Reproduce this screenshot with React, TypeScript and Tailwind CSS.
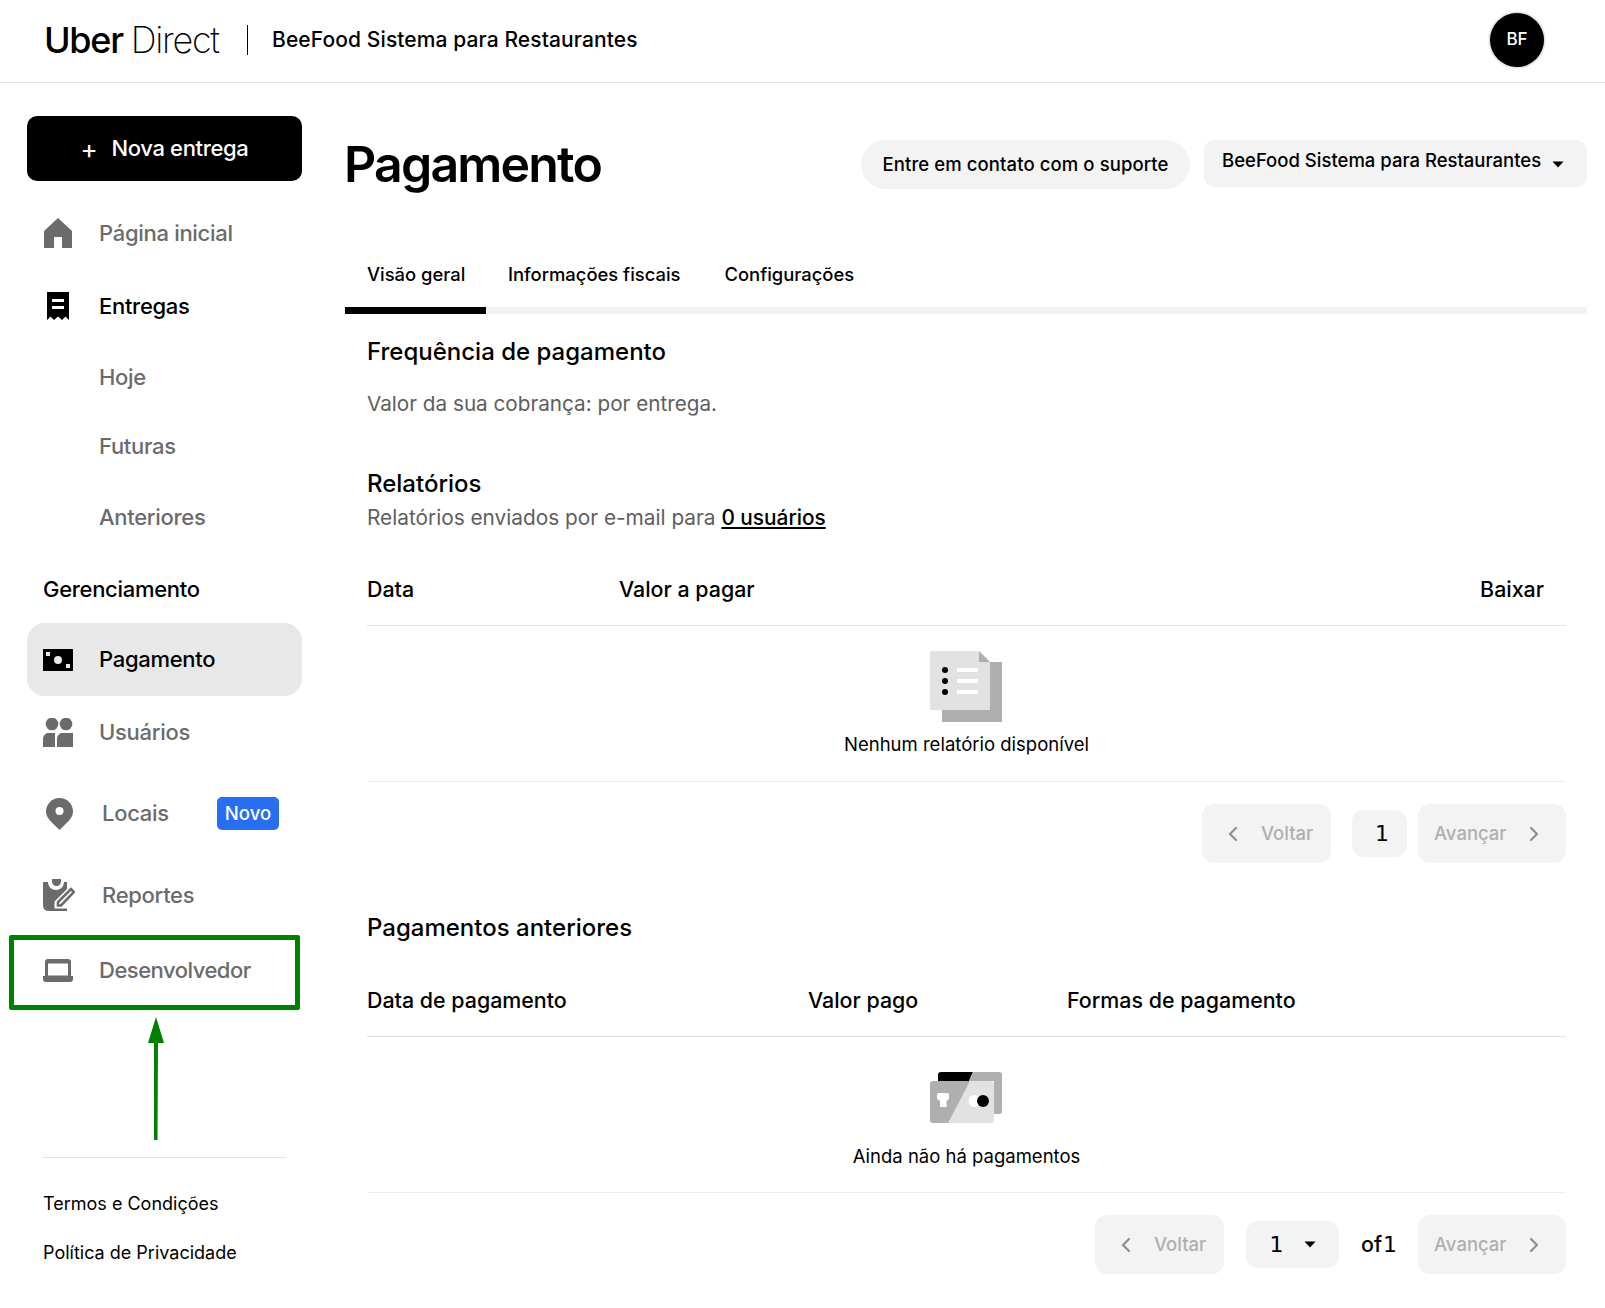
import { ChevronLeft, ChevronRight } from 'lucide-react';

const Caret = () => (
  <svg width="12" height="7" viewBox="0 0 12 7" className="shrink-0">
    <path d="M0.5 0.5H11.5L6 6.5Z" fill="#000" />
  </svg>
);

const HomeIcon = () => (
  <svg width="28" height="30" viewBox="0 0 28 30">
    <path d="M14 0L28 13V30H18V19H10V30H0V13Z" fill="#6b6b6b" />
  </svg>
);

const ReceiptIcon = () => (
  <svg width="22" height="28" viewBox="0 0 22 28">
    <path d="M0 0H22V28L18.5 24.5L15 28L11 24.5L7 28L3.500 24.500L0 28Z" fill="#000" />
    <rect x="5" y="7" width="12" height="3" fill="#fff" />
    <rect x="5" y="14" width="12" height="3" fill="#fff" />
  </svg>
);

const MoneyIcon = () => (
  <svg width="30" height="22" viewBox="0 0 30 22">
    <rect width="30" height="22" fill="#000" />
    <circle cx="15" cy="11" r="4" fill="#e8e8e8" />
    <rect x="3" y="3" width="4" height="4" fill="#e8e8e8" />
    <rect x="23" y="15" width="4" height="4" fill="#e8e8e8" />
  </svg>
);

const UsersIcon = () => (
  <svg width="30" height="29" viewBox="0 0 30 29">
    <circle cx="9" cy="6" r="6.300" fill="#6b6b6b" />
    <circle cx="23" cy="6" r="6.300" fill="#6b6b6b" />
    <path d="M0 29V21Q0 17 4 15H12V29Z" fill="#6b6b6b" />
    <path d="M14 29V21Q14 17 18 15H30V29Z" fill="#6b6b6b" />
  </svg>
);

const PinIcon = () => (
  <svg width="27" height="32" viewBox="0 0 27 32">
    <path d="M13.500 0C21 0 27 6 27 13.500C27 19 23 23 13.500 32C4 23 0 19 0 13.500C0 6 6 0 13.500 0Z" fill="#6b6b6b" />
    <circle cx="13.500" cy="13" r="4" fill="#fff" />
  </svg>
);

const ClipboardIcon = () => (
  <svg width="32" height="32" viewBox="0 0 32 32">
    <path d="M0 3H5C5 8 9 11 13 11C17 11 21 8 21 3H24V10L11.500 22.500V29.500H24V32H6Q0 32 0 26Z" fill="#6b6b6b" />
    <path d="M9 0H18V2C18 5 16 7 13.500 7C11 7 9 5 9 2Z" fill="#6b6b6b" />
    <path d="M15 26.500V23L28 10L31 13L18 26.500Z" fill="none" stroke="#6b6b6b" strokeWidth="2.600" />
  </svg>
);

const LaptopIcon = () => (
  <svg width="30" height="23" viewBox="0 0 30 23">
    <path d="M2 3Q2 0 5 0H25Q28 0 28 3V17H30V20Q30 23 27 23H3Q0 23 0 20V17H2ZM5 4.500V16.500H25V4.500Z" fill="#6b6b6b" fillRule="evenodd" />
  </svg>
);

const ReportsEmpty = () => (
  <svg width="72" height="71" viewBox="0 0 72 71" className="-ml-[1px]">
    <rect x="12" y="11" width="60" height="60" fill="#afafaf" />
    <path d="M0 0H49L60 11V59H0Z" fill="#e2e2e2" />
    <path d="M49 0L60 11H49Z" fill="#afafaf" />
    <circle cx="15" cy="19" r="3" fill="#000" />
    <circle cx="15" cy="30" r="3" fill="#000" />
    <circle cx="15" cy="41" r="3" fill="#000" />
    <rect x="27" y="17" width="21" height="4" fill="#fff" />
    <rect x="27" y="28" width="21" height="4" fill="#fff" />
    <rect x="27" y="39" width="21" height="4" fill="#fff" />
  </svg>
);

const CardsEmpty = () => (
  <svg width="72" height="51" viewBox="0 0 72 51" className="-ml-[1px]">
    <path d="M11 0H43L39 9H8V3Q8 0 11 0Z" fill="#000" />
    <path d="M43 0H69Q72 0 72 3V39Q72 42 69 42H64V9H39Z" fill="#afafaf" />
    <rect x="0" y="9" width="64" height="42" rx="3" fill="#e2e2e2" />
    <path d="M3 9H40L18 51H3Q0 51 0 48V12Q0 9 3 9Z" fill="#afafaf" />
    <path d="M9 21H17Q19 21 19 23V27L16.500 29V35H10V29L7 27V23Q7 21 9 21Z" fill="#fff" />
    <circle cx="44.500" cy="29" r="6" fill="#fff" />
    <circle cx="53" cy="29" r="6" fill="#000" />
  </svg>
);

const PageButton = ({ label, dir }: { label: string; dir: 'prev' | 'next' }) => (
  <div className="flex h-[59px] items-center rounded-[12px] bg-[#f3f3f3] text-[18.5px] font-medium text-[#afafaf]">
    {dir === 'prev' && <ChevronLeft size={24} strokeWidth={2.2} className="ml-[19px] mr-[16px] text-[#8f8f8f]" />}
    <span className={dir === 'next' ? 'ml-[16px] mr-[15px]' : ''}>{label}</span>
    {dir === 'next' && <ChevronRight size={24} strokeWidth={2.2} className="text-[#8f8f8f]" />}
  </div>
);

const App = () => {
  return (
    <div className="relative h-[1308px] w-[1605px] overflow-hidden bg-white font-['Inter',sans-serif] text-black">
      <header className="flex h-[83px] items-center border-b border-[#e2e2e2] pb-[2px] pl-[44px] pr-[61px]">
        <div className="flex w-[203px] items-baseline text-[36px] leading-none">
          <span className="font-medium tracking-[-1.3px]">Uber</span>
          <span className="ml-[8px] font-extralight tracking-[-1.3px]">Direct</span>
        </div>
        <div className="h-[30px] w-px bg-black" />
        <span className="ml-[24px] text-[21px] font-medium tracking-[0.1px]">BeeFood Sistema para Restaurantes</span>
        <div className="ml-auto flex h-[54px] w-[54px] items-center justify-center rounded-full bg-black text-[17px] font-medium text-white shadow-[0_0_3px_rgba(0,0,0,0.4)]">
          BF
        </div>
      </header>

      <div className="flex">
        <aside className="ml-[27px] w-[275px] shrink-0">
          <button className="mt-[33px] flex h-[65px] w-full items-center justify-center gap-[14px] rounded-[10px] bg-black text-[22px] font-medium tracking-[-0.35px] text-white">
            <span className="text-[26px] font-normal leading-none">+</span>
            <span>Nova entrega</span>
          </button>

          <nav className="text-[22px] font-medium tracking-[-0.3px] text-[#6b6b6b]">
            <div className="mt-[17px] flex h-[70px] items-center pl-[17px]">
              <div className="w-[55px]"><HomeIcon /></div>
              <span>Página inicial</span>
            </div>
            <div className="flex h-[76px] items-center pl-[20px] text-black">
              <div className="w-[52px]"><ReceiptIcon /></div>
              <span>Entregas</span>
            </div>
            <div className="flex h-[67px] items-center pl-[72px]">Hoje</div>
            <div className="flex h-[71px] items-center pl-[72px]">Futuras</div>
            <div className="flex h-[70px] items-center pl-[72px]">Anteriores</div>
            <div className="flex h-[71px] items-center pl-[16px] pt-[3px] text-black">Gerenciamento</div>
            <div className="flex h-[73px] items-center rounded-[18px] bg-[#e8e8e8] pl-[16px] text-black">
              <div className="w-[56px]"><MoneyIcon /></div>
              <span>Pagamento</span>
            </div>
            <div className="flex h-[72px] items-center pl-[16px]">
              <div className="w-[56px]"><UsersIcon /></div>
              <span>Usuários</span>
            </div>
            <div className="flex h-[91px] items-center pl-[19px]">
              <div className="w-[56px]"><PinIcon /></div>
              <span className="w-[115px]">Locais</span>
              <span className="flex h-[33px] w-[62px] items-center justify-center rounded-[5px] bg-[#276ef1] text-[18.5px] tracking-normal text-white">Novo</span>
            </div>
            <div className="flex h-[72px] items-center pl-[16px]">
              <div className="w-[59px]"><ClipboardIcon /></div>
              <span>Reportes</span>
            </div>
            <div className="flex h-[77px] items-center pl-[16px] pt-[2px]">
              <div className="w-[56px]"><LaptopIcon /></div>
              <span className="tracking-[-0.5px]">Desenvolvedor</span>
            </div>
          </nav>

          <div className="mx-[16px] mt-[149px] border-t border-[#e2e2e2] pt-[21px] text-[18px]">
            <div className="flex h-[48px] items-center">Termos e Condições</div>
            <div className="flex h-[50px] items-center">Política de Privacidade</div>
          </div>
        </aside>

        <main className="ml-[43px] w-[1242px]">
          <div className="mt-[51px] flex items-start">
            <h1 className="-ml-[1px] h-[60px] text-[50px] font-semibold leading-[60px] tracking-[-1.8px]">Pagamento</h1>
            <div className="ml-auto mt-[6px] flex items-start gap-[14px]">
              <button className="h-[49px] w-[329px] rounded-full bg-[#f3f3f3] text-[18.5px] font-medium tracking-[0.1px]">Entre em contato com o suporte</button>
              <button className="flex h-[47px] w-[383px] items-center gap-[11px] whitespace-nowrap rounded-[10px] bg-[#f3f3f3] pb-[5px] pl-[18px] text-[18.5px] font-medium">
                <span>BeeFood Sistema para Restaurantes</span>
                <span className="pt-[7px]"><Caret /></span>
              </button>
            </div>
          </div>

          <div className="mt-[46px] flex text-[18.4px] font-medium">
            <div className="flex h-[67px] w-[141px] items-center pl-[22px] pt-[2px]">Visão geral</div>
            <div className="flex h-[67px] items-center px-[22px] pt-[2px]">Informações fiscais</div>
            <div className="flex h-[67px] items-center px-[22px] pt-[2px]">Configurações</div>
          </div>
          <div className="flex h-[7px] bg-[#f3f3f3]">
            <div className="w-[141px] bg-black" />
          </div>

          <section className="pl-[22px] pr-[21px]">
            <h2 className="mt-[22px] text-[24px] font-medium leading-[32px]">Frequência de pagamento</h2>
            <p className="mt-[21px] text-[20.7px] leading-[30px] text-[#5e5e5e]">Valor da sua cobrança: por entrega.</p>
            <h2 className="mt-[49px] text-[24px] font-medium leading-[32px]">Relatórios</h2>
            <p className="mt-[3px] text-[20.8px] leading-[30px] text-[#5e5e5e]">
              Relatórios enviados por e-mail para <a className="font-medium text-black underline">0 usuários</a>
            </p>

            <div className="mt-[22px] flex h-[71px] items-center border-b border-[#e2e2e2] pb-[2px] pr-[22px] text-[21.4px] font-medium">
              <div className="w-[252px]">Data</div>
              <div>Valor a pagar</div>
              <div className="ml-auto">Baixar</div>
            </div>
            <div className="flex flex-col items-center border-b border-[#eeeeee] pb-[22px] pt-[25px]">
              <ReportsEmpty />
              <p className="mt-[7px] text-[18.5px] leading-[30px]">Nenhum relatório disponível</p>
            </div>
            <div className="mt-[22px] flex items-center justify-end">
              <div className="w-[129px]"><PageButton label="Voltar" dir="prev" /></div>
              <div className="ml-[21px] flex h-[47px] w-[55px] items-center justify-center rounded-[12px] bg-[#f3f3f3] pl-[5px] font-['DejaVu_Sans',sans-serif] text-[22px]">1</div>
              <div className="ml-[11px] w-[148px]"><PageButton label="Avançar" dir="next" /></div>
            </div>

            <h2 className="mt-[49px] text-[24px] font-medium leading-[32px]">Pagamentos anteriores</h2>
            <div className="mt-[22px] flex h-[71px] items-center border-b border-[#e2e2e2] pb-[2px] text-[21.4px] font-medium">
              <div className="w-[441px]">Data de pagamento</div>
              <div className="w-[259px]">Valor pago</div>
              <div>Formas de pagamento</div>
            </div>
            <div className="flex flex-col items-center border-b border-[#eeeeee] pb-[21px] pt-[35px]">
              <CardsEmpty />
              <p className="mt-[18px] text-[18.5px] leading-[30px]">Ainda não há pagamentos</p>
            </div>
            <div className="mt-[22px] flex items-center justify-end">
              <div className="w-[129px]"><PageButton label="Voltar" dir="prev" /></div>
              <div className="ml-[22px] flex h-[47px] w-[93px] items-center justify-center gap-[20px] rounded-[12px] bg-[#f3f3f3] font-['DejaVu_Sans',sans-serif] text-[22px]">
                <span>1</span>
                <Caret />
              </div>
              <span className="ml-[22px] flex w-[57px] items-baseline gap-[1px] text-[21.4px] font-medium">
                of<span className="font-['DejaVu_Sans',sans-serif] text-[22px] font-normal">1</span>
              </span>
              <div className="w-[148px]"><PageButton label="Avançar" dir="next" /></div>
            </div>
          </section>
        </main>
      </div>

      {/* green annotation over the sidebar */}
      <div className="absolute left-[9px] top-[935px] h-[75px] w-[291px] rounded-[2px] border-[5px] border-[#008000]" />
      <svg className="absolute left-[146px] top-[1017px]" width="20" height="125" viewBox="0 0 20 125">
        <path d="M10 0L18 26H12L11.500 123H8L8 26H2Z" fill="#008000" />
      </svg>
    </div>
  );
};

export default App;
